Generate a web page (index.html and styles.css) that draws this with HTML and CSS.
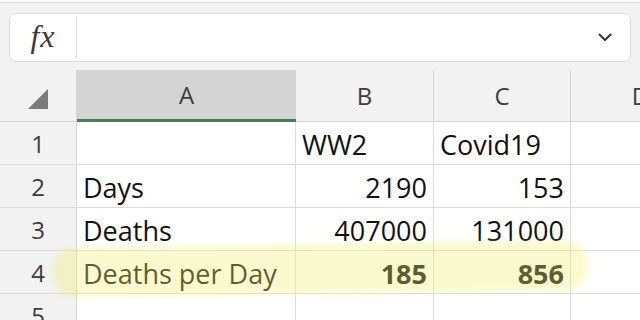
FILE: index.html
```html
<!DOCTYPE html>
<html lang="en">
<head>
    <meta charset="UTF-8">
    <meta name="viewport" content="width=device-width, initial-scale=1.0">
    <title>Deaths per Day</title>
    <link rel="stylesheet" href="styles.css">
</head>
<body>
    <div class="topline"></div>

    <!-- Formula bar -->
    <div class="toolbar">
        <div class="formula-bar">
            <div class="fx">fx</div>
            <div class="separator"></div>
            <div class="input"></div>
            <svg class="chevron" width="14" height="9" viewBox="0 0 14 9">
                <path d="M1.5 1.5 L7 7 L12.5 1.5" fill="none" stroke="#333" stroke-width="2" stroke-linecap="round" stroke-linejoin="round"/>
            </svg>
        </div>
    </div>

    <!-- Sheet grid -->
    <div class="sheet-wrap">
        <div class="sheet">
            <div class="corner">
                <svg width="20" height="20" viewBox="0 0 20 20"><path d="M20 0 L20 20 L0 20 Z" fill="#7b7b7b"/></svg>
            </div>
            <div class="col-head selected">A</div>
            <div class="col-head">B</div>
            <div class="col-head">C</div>
            <div class="col-head">D</div>

            <div class="row-head">1</div>
            <div class="cell"></div>
            <div class="cell">WW2</div>
            <div class="cell">Covid19</div>
            <div class="cell"></div>

            <div class="row-head">2</div>
            <div class="cell">Days</div>
            <div class="cell num">2190</div>
            <div class="cell num">153</div>
            <div class="cell"></div>

            <div class="row-head">3</div>
            <div class="cell">Deaths</div>
            <div class="cell num">407000</div>
            <div class="cell num">131000</div>
            <div class="cell"></div>

            <div class="row-head">4</div>
            <div class="cell">Deaths per Day</div>
            <div class="cell num bold">185</div>
            <div class="cell num bold">856</div>
            <div class="cell"></div>

            <div class="row-head">5</div>
            <div class="cell"></div>
            <div class="cell"></div>
            <div class="cell"></div>
            <div class="cell"></div>
        </div>

        <!-- Highlighter stroke over row 4 -->
        <div class="highlight"></div>
    </div>
</body>
</html>
```

FILE: styles.css
```css
/* General Styles */
html, body {
    overflow: hidden;
}

body {
    margin: 0;
    font-family: "Open Sans", "Noto Sans", sans-serif;
    background-color: #f2f2f2;
    color: #111;
}

.topline {
    height: 2px;
    background-color: #fbfbfb;
    border-bottom: 1px solid #dadada;
}

/* Formula bar */
.toolbar {
    padding: 10px 9px 8px 9px;
}

.formula-bar {
    display: flex;
    align-items: center;
    height: 47px;
    background-color: #fff;
    border: 1px solid #dcdcdc;
    border-radius: 7px;
}

.fx {
    width: 66px;
    text-align: center;
    font-family: "Liberation Serif", "DejaVu Serif", serif;
    font-style: italic;
    font-size: 32px;
    line-height: 1;
    padding-bottom: 4px;
    color: #3a3a3a;
    letter-spacing: 1px;
}

.separator {
    width: 1px;
    height: 41px;
    background-color: #dcdcdc;
}

.input {
    flex: 1;
}

.chevron {
    margin-right: 18px;
}

/* Sheet */
.sheet-wrap {
    position: relative;
}

.sheet {
    display: grid;
    grid-template-columns: 77px 219px 138px 137px 140px;
    grid-template-rows: 52px repeat(5, 43px);
    width: 711px;
}

.corner {
    display: flex;
    align-items: center;
    justify-content: flex-end;
    padding-right: 28px;
    padding-top: 6px;
    border-right: 1px solid #d6d6d6;
    border-bottom: 1px solid #d6d6d6;
}

.col-head {
    display: flex;
    align-items: center;
    justify-content: center;
    font-size: 24px;
    color: #3d3d3d;
    border-right: 1px solid #d2d2d2;
    border-bottom: 1px solid #d6d6d6;
}

.col-head.selected {
    background-color: #d4d4d4;
    border-right: none;
    border-bottom: 3px solid #4d7a5b;
}

.row-head {
    display: flex;
    align-items: center;
    justify-content: center;
    font-size: 24px;
    color: #3d3d3d;
    border-right: 1px solid #d6d6d6;
    border-bottom: 1px solid #dcdcdc;
}

.cell {
    display: flex;
    align-items: center;
    padding: 2px 6px 0 6px;
    font-size: 27px;
    white-space: nowrap;
    background-color: #fff;
    border-right: 1px solid #dcdcdc;
    border-bottom: 1px solid #dcdcdc;
}

.cell.num {
    justify-content: flex-end;
}

.cell.bold {
    font-weight: 700;
}

.highlight {
    position: absolute;
    left: 52px;
    top: 174px;
    width: 536px;
    height: 50px;
    border-radius: 22px;
    background-color: rgba(242, 239, 110, 0.34);
    filter: blur(3px);
    transform: rotate(-0.8deg);
}
```
